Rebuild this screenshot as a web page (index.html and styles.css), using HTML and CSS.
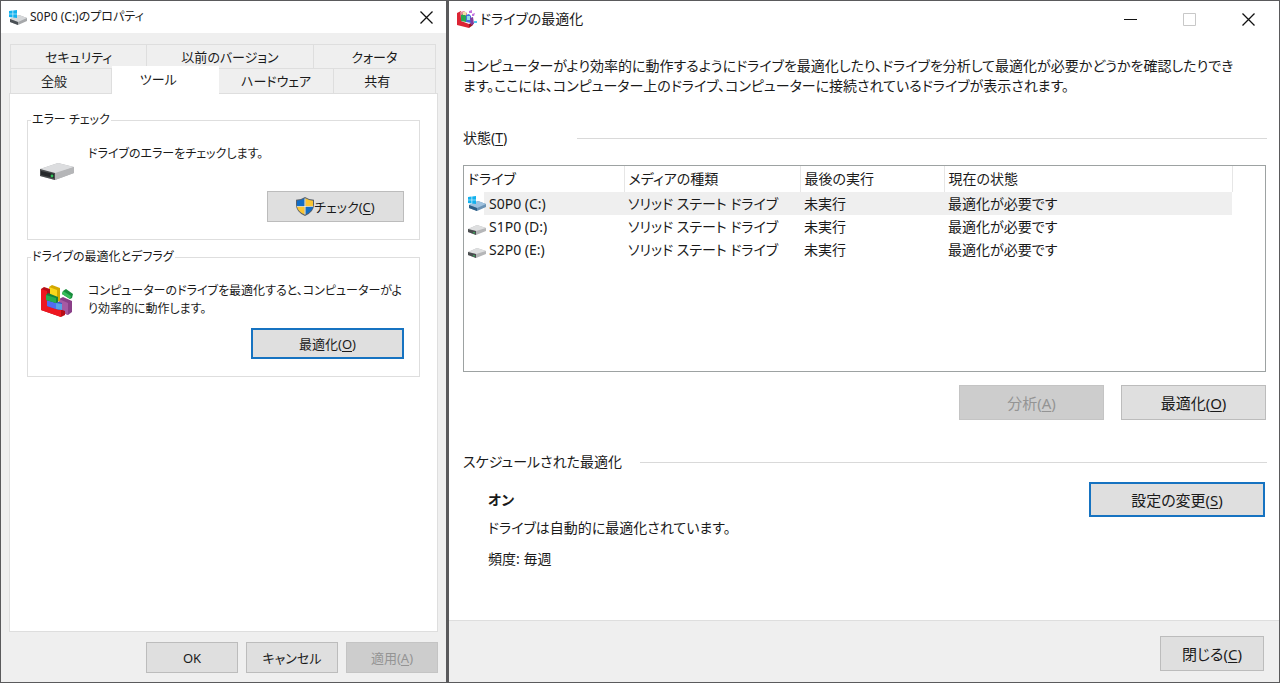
FILE: index.html
```html
<!DOCTYPE html>
<html lang="ja">
<head>
<meta charset="utf-8">
<meta name="viewport" content="width=device-width, initial-scale=1">
<title>ドライブの最適化</title>
<link rel="stylesheet" href="styles.css">
</head>
<body>
<svg class="defs" aria-hidden="true">
  <defs>
    <symbol id="drive" viewBox="0 0 34 18">
      <path d="M0 6 18 0 34 4 34 10 15 17 0 13Z" fill="#b4b4b6"/>
      <path d="M0 6 18 0 34 4 15 11Z" fill="#dcdddf"/>
      <path d="M0 6 15 10 15 17 0 13Z" fill="#4a4c4e"/>
      <path d="M1 8 14 11 14 15 1 12Z" fill="#25282a"/>
      <path d="M15 10 34 4 34 10 15 17Z" fill="#b5b6b8"/>
      <circle cx="12" cy="13" r="1.4" fill="#2fc25a"/>
    </symbol>
    <symbol id="drive-small" viewBox="0 0 18 10">
      <path d="M0 4 9 0 18 3V6L8 10 0 7Z" fill="#b5b6b8"/>
      <path d="M0 4 9 0 18 3 8 6Z" fill="#dedfe0"/>
      <path d="M0 4 8 6V10L0 7Z" fill="#4a4d4f"/>
      <path d="M5 7H7V8.500H5Z" fill="#3f9c5a"/>
    </symbol>
    <symbol id="winflag" viewBox="0 0 8 8">
      <path d="M0 1 3.6.5V3.7H0ZM4.2.4 8 0V3.7H4.2ZM0 4.3H3.6V7.5L0 7ZM4.2 4.3H8V8L4.2 7.6Z" fill="#12b1ee"/>
    </symbol>
    <symbol id="defrag" viewBox="0 0 32 32">
      <path d="M18 14 22 12 31 16V27L27 30 18 26Z" fill="#8a3f88"/>
      <path d="M18 14 27 18V30L18 26Z" fill="#a65aa3"/>
      <path d="M8 2 11 0 19 3V16L16 17 8 14Z" fill="#d3a800"/>
      <path d="M8 2 16 5V17L8 14Z" fill="#fbd71c"/>
      <path d="M0 4 3 2 9 4V20L24 26V30L20 32 0 25Z" fill="#b80d16"/>
      <path d="M0 4 6 6V19L20 25V32L0 25Z" fill="#ee1620"/>
      <path d="M6 15 9 14 21 18V24L18 25 6 21Z" fill="#3c55c8"/>
      <path d="M6 15 15 18V24L6 21Z" fill="#526df0"/>
      <path d="M15 18 21 19V25L15 24Z" fill="#55a3e6"/>
      <path d="M5 10 7 8 17 12V17L15 18 5 15Z" fill="#16813a"/>
      <path d="M5 10 15 13V18L5 15Z" fill="#27ad50"/>
      <path d="M22 6 25 4 32 9 31 13 29 14 21 9Z" fill="#178c3c"/>
      <path d="M22 6 30 11 29 14 21 9Z" fill="#36bd5b"/>
    </symbol>
    <symbol id="defrag-small" viewBox="0 0 20 18">
      <path d="M0 3 4 1V11L12 14V18L0 15Z" fill="#dc2434"/>
      <path d="M12 14 16 12V15L12 18Z" fill="#9e1021"/>
      <path d="M3 2 7 1 10 3V10L4 9Z" fill="#e48a9b"/>
      <path d="M4 5 7 4 9 6V12L4 11Z" fill="#29a751"/>
      <path d="M6 2 9 2 9 5 6 5Z" fill="#eee6a5"/>
      <path d="M9 5 12 4 14 6V13L9 12Z" fill="#476fdb"/>
      <path d="M10 6H13V10H10Z" fill="#91dce6"/>
      <path d="M13 8 16 7 17 14 14 15Z" fill="#803b9d"/>
      <path d="M12 1 15 0 15 3 12 3ZM15 4 18 3 17 6 15 6Z" fill="#c373df"/>
      <path d="M17 11H20V13H17Z" fill="#52c8ef"/>
    </symbol>
    <symbol id="shield" viewBox="0 0 18 19">
      <path d="M9 0Q5 2.8 0 2.8V8Q0 15 9 19Q18 15 18 8V2.8Q13 2.8 9 0Z" fill="#59616b"/>
      <path d="M8.6 1.3Q5 3.6 1 3.8V9H8.6Z" fill="#126dc6"/>
      <path d="M9.4 1.3Q13 3.6 17 3.8V9H9.4Z" fill="#fac532"/>
      <path d="M1 9.7H8.6V17.5Q2 14.8 1 9.7Z" fill="#fac532"/>
      <path d="M17 9.7H9.4V17.5Q16 14.8 17 9.7Z" fill="#126dc6"/>
      <path d="M8.5 1.4H9.5V17.6H8.5ZM1 8.9H17V9.8H1Z" fill="#f5f2dd"/>
    </symbol>
    <symbol id="sysdrive" viewBox="0 0 18 15">
      <path d="M1 9 10 5 18 8V11L9 15 1 12Z" fill="#a6a8aa"/>
      <path d="M1 9 10 5 18 8 9 12Z" fill="#d5d7d9"/>
      <path d="M1 9 9 12V15L1 12Z" fill="#4a5055"/>
      <use href="#winflag" x="0" y="0" width="8" height="8"/>
    </symbol>
    <symbol id="sysdrive-selected" viewBox="0 0 18 15">
      <path d="M1 9 10 5 18 8V11L9 15 1 12Z" fill="#6b93b5"/>
      <path d="M1 9 10 5 18 8 9 12Z" fill="#9fc2df"/>
      <path d="M1 9 9 12V15L1 12Z" fill="#2f5f86"/>
      <use href="#winflag" x="0" y="0" width="8" height="8"/>
    </symbol>
    <symbol id="close" viewBox="0 0 13 13">
      <path d="M.5.5 12.5 12.5M12.5.5.5 12.5" stroke="#111" stroke-width="1.3" fill="none"/>
    </symbol>
  </defs>
</svg>

<main class="desktop">
  <section class="window properties" aria-labelledby="prop-title">
    <header class="titlebar">
      <svg class="title-icon"><use href="#sysdrive"/></svg>
      <h1 class="title" id="prop-title">S0P0 (C:)のプロパティ</h1>
      <button class="caption-button" type="button" aria-label="閉じる"><svg class="caption-glyph"><use href="#close"/></svg></button>
    </header>
    <div class="sheet">
      <div class="tabs" role="tablist">
        <div class="tab-row tab-row-back">
          <button class="tab" type="button" role="tab" aria-selected="false">セキュリティ</button>
          <button class="tab" type="button" role="tab" aria-selected="false">以前のバージョン</button>
          <button class="tab" type="button" role="tab" aria-selected="false">クォータ</button>
        </div>
        <div class="tab-row tab-row-front">
          <button class="tab tab-short" type="button" role="tab" aria-selected="false">全般</button>
          <button class="tab tab-short tab-active" type="button" role="tab" aria-selected="true">ツール</button>
          <button class="tab" type="button" role="tab" aria-selected="false">ハードウェア</button>
          <button class="tab tab-short" type="button" role="tab" aria-selected="false">共有</button>
        </div>
      </div>
      <div class="panel" role="tabpanel">
        <fieldset class="group">
          <legend class="legend">エラー チェック</legend>
          <div class="group-body">
            <svg class="group-icon drive-icon"><use href="#drive"/></svg>
            <p class="group-text">ドライブのエラーをチェックします。</p>
          </div>
          <div class="group-actions">
            <button class="button check-button" type="button"><svg class="shield"><use href="#shield"/></svg><span>チェック(<u>C</u>)</span></button>
          </div>
        </fieldset>
        <fieldset class="group">
          <legend class="legend">ドライブの最適化とデフラグ</legend>
          <div class="group-body">
            <svg class="group-icon defrag-icon"><use href="#defrag"/></svg>
            <p class="group-text">コンピューターのドライブを最適化すると、コンピューターがよ<br>り効率的に動作します。</p>
          </div>
          <div class="group-actions">
            <button class="button button-default optimize-button" type="button"><span>最適化(<u>O</u>)</span></button>
          </div>
        </fieldset>
      </div>
      <footer class="sheet-footer">
        <button class="button" type="button">OK</button>
        <button class="button" type="button">キャンセル</button>
        <button class="button" type="button" disabled><span>適用(<u>A</u>)</span></button>
      </footer>
    </div>
  </section>

  <section class="window optimizer" aria-labelledby="opt-title">
    <header class="titlebar">
      <svg class="title-icon"><use href="#defrag-small"/></svg>
      <h1 class="title" id="opt-title">ドライブの最適化</h1>
      <button class="caption-button" type="button" aria-label="最小化"><svg class="caption-glyph" viewBox="0 0 13 13"><path d="M0 6H13V7H0Z" fill="#111"/></svg></button>
      <button class="caption-button" type="button" aria-label="最大化" disabled><svg class="caption-glyph" viewBox="0 0 13 13"><path d="M.5.5H12.5V12.5H.5Z" fill="none" stroke="#c8c8c8"/></svg></button>
      <button class="caption-button" type="button" aria-label="閉じる"><svg class="caption-glyph"><use href="#close"/></svg></button>
    </header>
    <div class="content">
      <p class="intro">コンピューターがより効率的に動作するようにドライブを最適化したり、ドライブを分析して最適化が必要かどうかを確認したりでき<br>ます。ここには、コンピューター上のドライブ、コンピューターに接続されているドライブが表示されます。</p>
      <h2 class="section-title status-title"><span>状態(<u>T</u>)</span></h2>
      <div class="list">
        <table class="drives">
          <colgroup><col class="col-drive"><col class="col-media"><col class="col-run"><col class="col-state"></colgroup>
          <thead>
            <tr><th>ドライブ</th><th>メディアの種類</th><th>最後の実行</th><th>現在の状態</th></tr>
          </thead>
          <tbody>
            <tr class="selected"><td class="drive-cell"><span class="drive-name"><svg class="row-icon"><use href="#sysdrive-selected"/></svg>S0P0 (C:)</span></td><td>ソリッド ステート ドライブ</td><td>未実行</td><td>最適化が必要です</td></tr>
            <tr><td class="drive-cell"><span class="drive-name"><svg class="row-icon row-icon-plain"><use href="#drive-small"/></svg>S1P0 (D:)</span></td><td>ソリッド ステート ドライブ</td><td>未実行</td><td>最適化が必要です</td></tr>
            <tr><td class="drive-cell"><span class="drive-name"><svg class="row-icon row-icon-plain"><use href="#drive-small"/></svg>S2P0 (E:)</span></td><td>ソリッド ステート ドライブ</td><td>未実行</td><td>最適化が必要です</td></tr>
          </tbody>
        </table>
      </div>
      <div class="list-actions">
        <button class="button" type="button" disabled><span>分析(<u>A</u>)</span></button>
        <button class="button" type="button"><span>最適化(<u>O</u>)</span></button>
      </div>
      <h2 class="section-title schedule-title"><span>スケジュールされた最適化</span></h2>
      <div class="schedule">
        <div class="schedule-text">
          <p class="schedule-on">オン</p>
          <p class="schedule-note">ドライブは自動的に最適化されています。</p>
          <p>頻度: 毎週</p>
        </div>
        <button class="button button-default settings-button" type="button"><span>設定の変更(<u>S</u>)</span></button>
      </div>
    </div>
    <footer class="window-footer">
      <button class="button" type="button"><span>閉じる(<u>C</u>)</span></button>
    </footer>
  </section>
</main>
</body>
</html>
```
FILE: styles.css
```css
* {
  box-sizing: border-box;
}

body {
  margin: 0;
  background: #5a5a5c;
  color: #1a1a1a;
  font-family: "Noto Sans", "Noto Sans CJK JP", sans-serif;
  font-feature-settings: "palt";
}

h1, h2, p {
  margin: 0;
  font-size: inherit;
  font-weight: 400;
}

button {
  font: inherit;
  font-feature-settings: inherit;
  color: inherit;
}

u {
  text-underline-offset: 2px;
}

svg {
  display: block;
  flex: none;
}

.defs {
  position: absolute;
  width: 0;
  height: 0;
}

.desktop {
  display: grid;
  grid-template-columns: 445fr 830fr;
  gap: 3px;
  min-height: 100vh;
  padding: 1px;
}

.window {
  display: flex;
  flex-direction: column;
  min-width: 0;
  background: #fff;
}

.properties {
  font-size: 13px;
  line-height: 18px;
}

.optimizer {
  font-size: 14px;
  line-height: 20px;
}

/* Title bars */
.titlebar {
  display: flex;
  align-items: center;
  height: 32px;
  padding-left: 8px;
}

.properties .title {
  font-size: 12px;
}

.title {
  flex: 1;
}

.title-icon {
  width: 18px;
  height: 15px;
  margin-right: 3px;
}

.caption-button {
  display: flex;
  align-items: center;
  justify-content: center;
  height: 32px;
  width: 40px;
  padding: 0;
  border: 0;
  background: none;
}

.caption-glyph {
  width: 13px;
  height: 13px;
}

.optimizer .titlebar {
  height: 36px;
  padding-right: 1px;
}

.optimizer .title-icon {
  width: 20px;
  height: 18px;
}

.optimizer .caption-button {
  width: 59px;
}

/* Push buttons */
.button {
  display: flex;
  align-items: center;
  justify-content: center;
  padding: 0;
  border: 1px solid #bcbcbc;
  background: #dfdfdf;
}

.button:disabled {
  border-color: #c4c4c4;
  background: #cdcdcd;
  color: #949494;
}

.button-default {
  border: 2px solid #1673c1;
}

.properties .button {
  width: 92px;
  height: 31px;
}

.optimizer .button {
  width: 145px;
  height: 35px;
  font-size: 15px;
}

/* Property sheet */
.sheet {
  display: flex;
  flex: 1;
  flex-direction: column;
  padding: 11px 8px 9px;
  background: #efefef;
}

.tabs {
  padding: 0 2px 0 1px;
}

.tab-row {
  display: grid;
  border-left: 1px solid #dedede;
}

.tab-row-back {
  grid-template-columns: 136fr 166fr 122fr;
}

.tab-row-front {
  grid-template-columns: 101fr 107fr 114fr 102fr;
}

.tab {
  height: 25px;
  padding: 0;
  border: 1px solid #dedede;
  border-width: 1px 1px 0 0;
  background: #efefef;
}

.tab-row-back .tab {
  height: 24px;
}

.tab-short {
  padding-right: 14px;
}

.tab-active {
  height: 28px;
  margin: -2px 0 -1px;
  padding-bottom: 3px;
  border-color: #fff;
  background: #fff;
  z-index: 1;
}

.panel {
  display: flex;
  flex: 1;
  flex-direction: column;
  gap: 8px;
  padding: 17px;
  border: 1px solid #dedede;
  background: #fff;
}

.group {
  min-width: 0;
  margin: 0;
  padding: 0 15px 17px 10px;
  border: 1px solid #dedede;
}

.legend {
  margin-left: -7px;
  padding: 0 1px;
  font-size: 12px;
}

.group-body {
  display: flex;
  align-items: flex-start;
  min-height: 62px;
  padding-top: 16px;
}

.drive-icon {
  width: 34px;
  height: 18px;
  margin: 18px 14px 0 2px;
}

.defrag-icon {
  width: 32px;
  height: 32px;
  margin: 3px 15px 0 3px;
}

.group-text {
  flex: 1;
  font-size: 12px;
  white-space: nowrap;
}

.group-actions {
  display: flex;
  justify-content: flex-end;
}

.properties .check-button {
  width: 137px;
}

.properties .optimize-button {
  width: 153px;
}

.shield {
  width: 18px;
  height: 19px;
}

.sheet-footer {
  display: flex;
  gap: 8px;
  justify-content: flex-end;
  margin-top: 10px;
}

/* Optimizer window */
.content {
  display: flex;
  flex: 1;
  flex-direction: column;
  padding: 19px 12px 0 14px;
}

.intro {
  white-space: nowrap;
}

.section-title {
  display: flex;
  align-items: center;
}

.section-title::after {
  content: "";
  flex: 1;
  height: 1px;
  background: #d9d9d9;
}

.status-title {
  gap: 70px;
  margin: 32px 0 17px;
}

.schedule-title {
  gap: 18px;
  margin: 32px 0 18px;
}

.list {
  height: 207px;
  margin-right: 1px;
  border: 1px solid #9da2a2;
}

.drives {
  width: 768px;
  max-width: 100%;
  border-collapse: collapse;
  table-layout: fixed;
}

.col-drive { width: 160px; }
.col-media { width: 176px; }
.col-run { width: 144px; }
.col-state { width: 288px; }

.drives th,
.drives td {
  height: 23px;
  padding: 0 4px;
  font-weight: 400;
  text-align: left;
}

.drives th {
  height: 26px;
  border-right: 1px solid #e6e6e6;
}

.selected td {
  background: #efefef;
}

.drives .selected .drive-cell {
  background: linear-gradient(to right, #fff 20px, #efefef 20px);
}

.drive-name {
  display: flex;
  align-items: center;
  gap: 3px;
}

.row-icon {
  width: 18px;
  height: 15px;
}

.row-icon-plain {
  height: 10px;
  margin-top: 6px;
}

.list-actions {
  display: flex;
  gap: 17px;
  justify-content: flex-end;
  margin-top: 13px;
  margin-right: 1px;
}

.schedule {
  display: flex;
  align-items: flex-start;
  justify-content: space-between;
  padding-left: 25px;
  padding-right: 2px;
}

.schedule-on {
  font-weight: 700;
}

.schedule-note {
  margin: 8px 0 11px;
}

.optimizer .settings-button {
  width: 176px;
  margin-top: -8px;
}

.window-footer {
  display: flex;
  justify-content: flex-end;
  padding: 15px 15px 11px;
  border-top: 1px solid #dedede;
  background: #efefef;
}

.window-footer .button {
  width: 104px;
}
```
